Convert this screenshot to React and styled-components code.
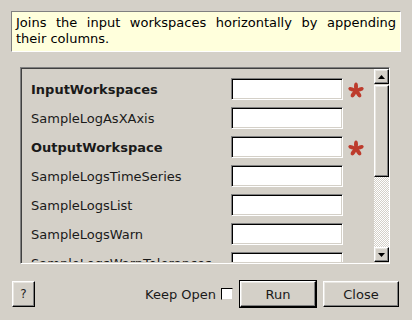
import styled, { createGlobalStyle } from "styled-components"

const GlobalStyle = createGlobalStyle`
    html, body {
        margin: 0;
        padding: 0;
        background: #d4d0c8;
    }
    body {
        font-family: "DejaVu Sans", "Liberation Sans", sans-serif;
        font-size: 13px;
        color: #000;
    }
`

const properties = [
    { name: "InputWorkspaces", mandatory: true },
    { name: "SampleLogAsXAxis" },
    { name: "OutputWorkspace", mandatory: true },
    { name: "SampleLogsTimeSeries" },
    { name: "SampleLogsList" },
    { name: "SampleLogsWarn" },
    { name: "SampleLogsWarnTolerances" },
]

function Asterisk() {
    const arms = [0, 72, 144, 216, 288]
    return (
        <Star viewBox="0 0 16 16">
            {arms.map((a) => (
                <ellipse key={a} cx="8" cy="4.4" rx="2" ry="3.8" transform={`rotate(${a} 8 8.6)`} fill="#bd3b2c" />
            ))}
            <circle cx="8" cy="8.6" r="2.5" fill="#bd3b2c" />
        </Star>
    )
}

function Arrow({ down }) {
    return (
        <svg width="7" height="4" viewBox="0 0 7 4">
            <polygon points={down ? "0,0 7,0 3.5,4" : "0,4 7,4 3.5,0"} fill="#000" />
        </svg>
    )
}

export default function App() {
    return (
        <Dialog>
            <GlobalStyle />
            <Description>
                Joins the input workspaces horizontally by appending their columns.
            </Description>
            <ScrollFrame>
                <Viewport>
                    {properties.map((p) => (
                        <PropRow key={p.name}>
                            <Label $bold={p.mandatory}>{p.name}</Label>
                            <TextBox />
                            {p.mandatory ? <Asterisk /> : <span />}
                        </PropRow>
                    ))}
                </Viewport>
                <ScrollBar>
                    <ArrowButton><Arrow /></ArrowButton>
                    <Thumb />
                    <Track />
                    <ArrowButton><Arrow down /></ArrowButton>
                </ScrollBar>
            </ScrollFrame>
            <BottomBar>
                <HelpButton>?</HelpButton>
                <Spacer />
                <KeepOpen>
                    Keep Open
                    <CheckBox />
                </KeepOpen>
                <DefaultFrame>
                    <Button>Run</Button>
                </DefaultFrame>
                <Button>Close</Button>
            </BottomBar>
        </Dialog>
    )
}

const Dialog = styled.div`
    width: 412px;
    height: 320px;
    box-sizing: border-box;
    padding-top: 11px;
    display: flex;
    flex-direction: column;
    overflow: hidden;
`

const Description = styled.div`
    margin: 0 11px;
    height: 41px;
    box-sizing: border-box;
    padding: 3px 4px 0 4px;
    background: #ffffdc;
    border: 1px solid;
    border-color: #808080 #ffffff #ffffff #808080;
    line-height: 16px;
    text-align: justify;
`

const ScrollFrame = styled.div`
    margin: 15px 22px 0 20px;
    height: 197px;
    box-sizing: border-box;
    display: flex;
    border: 1px solid;
    border-color: #808080 #ffffff #ffffff #808080;
    box-shadow: inset 1px 1px 0 #404040;
    padding: 1px 0 1px 1px;
`

const Viewport = styled.div`
    flex: 1;
    overflow: hidden;
    padding: 9px 0 0 9px;
    display: flex;
    flex-direction: column;
    gap: 7px;
`

const PropRow = styled.div`
    display: grid;
    grid-template-columns: 195px 112px 16px;
    column-gap: 5px;
    align-items: center;
    flex-shrink: 0;
`

const Label = styled.span`
    font-weight: ${(p) => (p.$bold ? "bold" : "normal")};
    white-space: nowrap;
    color: #1a1a1a;
`

const TextBox = styled.div`
    height: 22px;
    box-sizing: border-box;
    background: #fff;
    border: 1px solid;
    border-color: #808080 #ffffff #ffffff #808080;
    box-shadow: inset 1px 1px 0 #000, inset -1px -1px 0 #d4d0c8;
`

const Star = styled.svg`
    width: 16px;
    height: 16px;
    margin-top: 1px;
`

const ScrollBar = styled.div`
    width: 15px;
    display: flex;
    flex-direction: column;
`

const raised = `
    background: #d4d0c8;
    box-sizing: border-box;
    border: 1px solid;
    border-color: #ffffff #000000 #000000 #ffffff;
    box-shadow: inset -1px -1px 0 #808080, inset 1px 1px 0 #e8e6e1;
`

const ArrowButton = styled.div`
    ${raised}
    height: 15px;
    display: flex;
    align-items: center;
    justify-content: center;
`

const Thumb = styled.div`
    ${raised}
    height: 92px;
    margin-top: 1px;
`

const Track = styled.div`
    flex: 1;
    background-color: #d4d0c8;
    background-image: repeating-conic-gradient(#ffffff 0 25%, #d4d0c8 0 50%);
    background-size: 2px 2px;
`

const BottomBar = styled.div`
    display: flex;
    align-items: center;
    padding: 0 13px 0 12px;
    margin-top: 16px;
    height: 28px;
`

const Spacer = styled.div`
    flex: 1;
`

const HelpButton = styled.div`
    ${raised}
    width: 23px;
    height: 26px;
    display: flex;
    align-items: center;
    justify-content: center;
    font-size: 12px;
    color: #222;
`

const KeepOpen = styled.label`
    display: flex;
    align-items: center;
    gap: 5px;
    margin-right: 6px;
    color: #1a1a1a;
`

const CheckBox = styled.span`
    width: 12px;
    height: 12px;
    box-sizing: border-box;
    background: #fff;
    border: 1px solid;
    border-color: #000 #d4d0c8 #d4d0c8 #000;
`

const DefaultFrame = styled.div`
    border: 1px solid #000;
    margin-right: 6px;
    display: flex;
`

const Button = styled.div`
    ${raised}
    width: 76px;
    height: 26px;
    display: flex;
    align-items: center;
    justify-content: center;
    color: #1a1a1a;
`
